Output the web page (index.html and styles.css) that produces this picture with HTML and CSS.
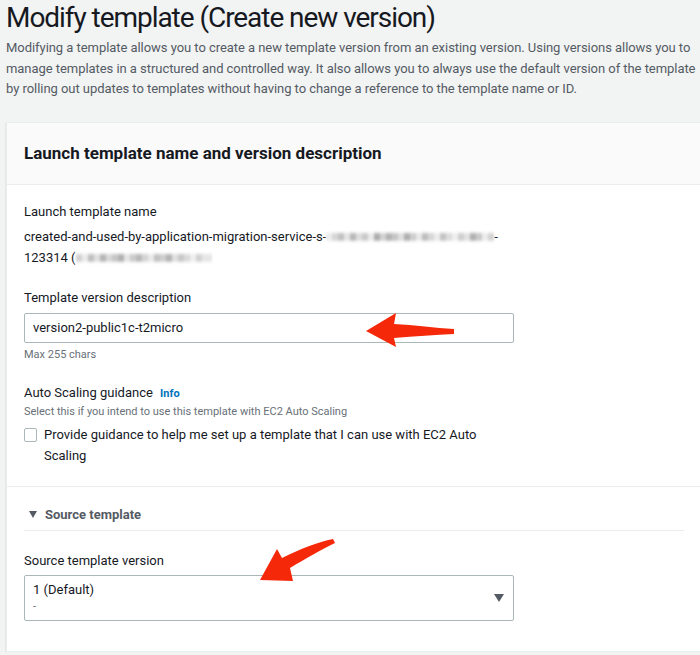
FILE: index.html
```html
<!DOCTYPE html>
<html lang="en">
<head>
<meta charset="utf-8">
<title>Modify template (Create new version)</title>
<link rel="stylesheet" href="styles.css">
</head>
<body>
<div class="page">
  <h1 class="title">Modify template (Create new version)</h1>
  <p class="intro">Modifying a template allows you to create a new template version from an existing version. Using versions allows you to manage templates in a structured and controlled way. It also allows you to always use the default version of the template by rolling out updates to templates without having to change a reference to the template name or ID.</p>

  <section class="card">
    <header class="card-header">
      <h2>Launch template name and version description</h2>
    </header>

    <div class="card-section">
      <div class="field-label">Launch template name</div>
      <div class="value">created-and-used-by-application-migration-service-s-<span class="redact r1" aria-hidden="true"></span>-<br>123314 (<span class="redact r2" aria-hidden="true"></span></div>

      <div class="field-label gap">Template version description</div>
      <div class="input-wrap">
        <div class="input">version2-public1c-t2micro</div>
        <svg class="arrow arrow1" width="100" height="40" viewBox="0 0 100 40" aria-hidden="true">
          <path d="M1 18 L31 0 L29 11 C50 12 70 15 89 16 L89 21 C70 22 50 23 29 25 L31 34 Z" fill="#f5290a"/>
        </svg>
      </div>
      <div class="hint">Max 255 chars</div>

      <div class="field-label gap">Auto Scaling guidance <a class="info" href="#">Info</a></div>
      <div class="hint">Select this if you intend to use this template with EC2 Auto Scaling</div>
      <label class="check-row">
        <span class="checkbox"></span>
        <span class="check-text">Provide guidance to help me set up a template that I can use with EC2 Auto Scaling</span>
      </label>
    </div>

    <div class="card-section second">
      <div class="expander">
        <svg class="caret" width="8" height="7" viewBox="0 0 8 7" aria-hidden="true"><path d="M0 0 H8 L4 7 Z" fill="#545b64"/></svg>
        <span>Source template</span>
      </div>
      <div class="field-label gap2">Source template version</div>
      <div class="select-wrap">
        <div class="select">
          <div class="select-main">1 (Default)</div>
          <div class="select-sub">-</div>
          <svg class="select-caret" width="10" height="8" viewBox="0 0 10 8" aria-hidden="true"><path d="M0 0 H10 L5 8 Z" fill="#545b64"/></svg>
        </div>
        <svg class="arrow arrow2" width="80" height="46" viewBox="0 0 80 46" aria-hidden="true">
          <path d="M0 41 L17 10 L22 19 C40 10 58 3 73 0 L75 4 C62 10 45 20 30 29 L33 42 Z" fill="#f5290a"/>
        </svg>
      </div>
    </div>
  </section>
</div>
</body>
</html>
```
FILE: styles.css
```css
html, body {
  margin: 0;
  padding: 0;
  background: #f2f3f3;
  overflow: hidden;
}
body {
  font-family: Roboto, "Liberation Sans", Arial, sans-serif;
  color: #16191f;
}
.page {
  padding: 0 0 0 6px;
}
.title {
  margin: 0;
  font-size: 28px;
  line-height: 36px;
  font-weight: 400;
  letter-spacing: -1.05px;
  color: #16191f;
}
.intro {
  margin: 2px 0 0;
  width: 694px;
  font-size: 13px;
  line-height: 20.5px;
  letter-spacing: -0.05px;
  color: #545b64;
}
.card {
  margin-top: 22px;
  width: 694px;
  background: #fff;
  border: 1px solid #eaeded;
  box-shadow: 0 1px 1px rgba(0, 28, 36, 0.3), 1px 1px 1px rgba(0, 28, 36, 0.15);
}
.card-header {
  background: #fafafa;
  border-bottom: 1px solid #eaeded;
  padding: 19px 17px 20px;
}
.card-header h2 {
  margin: 0;
  font-size: 17px;
  line-height: 22px;
  font-weight: 700;
  color: #16191f;
}
.card-section {
  padding: 16px 17px 20px;
  border-bottom: 1px solid #eaeded;
}
.card-section.second {
  border-bottom: none;
  padding: 17px 17px 30px;
}
.field-label {
  font-size: 13px;
  line-height: 21px;
  color: #16191f;
}
.field-label.gap {
  margin-top: 19px;
}
.field-label.gap2 {
  margin-top: 19px;
}
.value {
  margin-top: 4px;
  font-size: 13px;
  line-height: 21px;
  color: #16191f;
}
.redact {
  display: inline-block;
  vertical-align: -3px;
  height: 14px;
  filter: blur(1.3px);
}
.r1 {
  width: 168px;
  background:
    linear-gradient(180deg, #fff 0 2px, rgba(255,255,255,0.5) 2px 4px, transparent 4px 10px, rgba(255,255,255,0.6) 10px 12px, #fff 12px),
    linear-gradient(90deg,
      #ececec 0 6px, #d6d6d6 6px 12px, #c2c2c2 12px 18px, #e4e4e4 18px 24px,
      #b8b8b8 24px 30px, #dcdcdc 30px 36px, #cacaca 36px 42px, #eaeaea 42px 48px,
      #aeaeae 48px 54px, #d2d2d2 54px 60px, #b4b4b4 60px 66px, #c6c6c6 66px 72px,
      #dedede 72px 78px, #b0b0b0 78px 84px, #cdcdcd 84px 90px, #e8e8e8 90px 96px,
      #bebebe 96px 102px, #d6d6d6 102px 108px, #ebebeb 108px 114px, #c4c4c4 114px 120px,
      #dcdcdc 120px 126px, #eeeeee 126px 132px, #cfcfcf 132px 138px, #e2e2e2 138px 144px,
      #b2b2b2 144px 150px, #c9c9c9 150px 156px, #ececec 156px 162px, #d3d3d3 162px 168px);
}
.r2 {
  width: 136px;
  background:
    linear-gradient(180deg, #fff 0 2px, rgba(255,255,255,0.5) 2px 4px, transparent 4px 10px, rgba(255,255,255,0.6) 10px 12px, #fff 12px),
    linear-gradient(90deg,
      #d2d2d2 0 6px, #eaeaea 6px 12px, #c0c0c0 12px 18px, #dfdfdf 18px 24px,
      #b6b6b6 24px 30px, #d8d8d8 30px 36px, #c6c6c6 36px 42px, #b2b2b2 42px 48px,
      #e4e4e4 48px 54px, #cbcbcb 54px 60px, #b9b9b9 60px 66px, #d4d4d4 66px 72px,
      #e9e9e9 72px 78px, #c2c2c2 78px 84px, #cecece 84px 90px, #b4b4b4 90px 96px,
      #e0e0e0 96px 102px, #c8c8c8 102px 108px, #dadada 108px 114px, #eeeeee 114px 120px,
      #d2d2d2 120px 126px, #e6e6e6 126px 136px);
}
.input-wrap, .select-wrap {
  position: relative;
  width: 490px;
  margin-top: 5px;
}
.select-wrap {
  margin-top: 4px;
}
.input {
  box-sizing: border-box;
  height: 30px;
  border: 1px solid #aab7b8;
  border-radius: 2px;
  padding: 0 8px;
  font-size: 13px;
  line-height: 28px;
  color: #16191f;
}
.hint {
  font-size: 11px;
  line-height: 16px;
  color: #687078;
}
.input-wrap + .hint {
  margin-top: 4px;
}
.info {
  margin-left: 4px;
  font-size: 11px;
  font-weight: 700;
  color: #0073bb;
  text-decoration: none;
}
.check-row {
  display: flex;
  gap: 7px;
  margin-top: 4px;
  width: 460px;
  font-size: 13px;
  line-height: 21px;
  color: #16191f;
}
.checkbox {
  flex: none;
  box-sizing: border-box;
  width: 13px;
  height: 14px;
  margin-top: 4px;
  border: 1px solid #aab7b8;
  border-radius: 2px;
  background: #fff;
}
.expander {
  display: flex;
  align-items: center;
  gap: 8px;
  padding: 0 0 5px 5px;
  border-bottom: 1px solid #eaeded;
  font-size: 13px;
  line-height: 21px;
  font-weight: 700;
  color: #545b64;
}
.select {
  position: relative;
  box-sizing: border-box;
  height: 46px;
  border: 1px solid #aab7b8;
  border-radius: 2px;
  padding: 3px 8px 0;
}
.select-main {
  font-size: 13px;
  line-height: 21px;
  color: #16191f;
}
.select-sub {
  font-size: 11px;
  line-height: 14px;
  color: #687078;
}
.select-caret {
  position: absolute;
  right: 9px;
  top: 18px;
}
.arrow {
  position: absolute;
}
.arrow1 {
  left: 341px;
  top: 0;
}
.arrow2 {
  left: 236px;
  top: -36px;
}
```
